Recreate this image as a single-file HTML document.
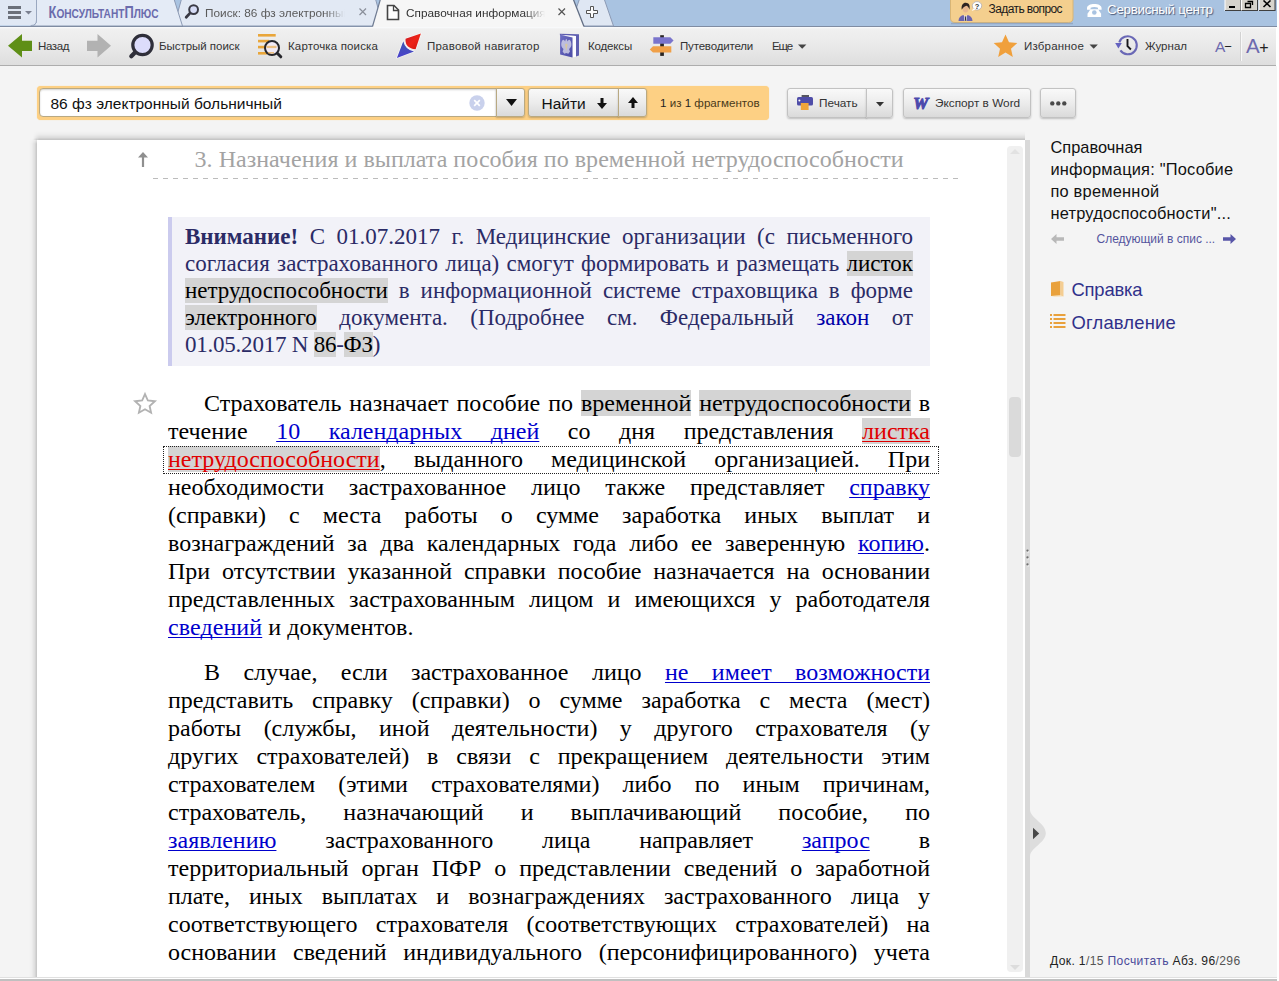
<!DOCTYPE html>
<html lang="ru"><head><meta charset="utf-8"><title>КонсультантПлюс</title>
<style>
*{box-sizing:border-box;margin:0;padding:0}
html,body{width:1279px;height:981px;overflow:hidden;background:#fff}
body{position:relative;font-family:"Liberation Sans",sans-serif;color:#222;font-size:12px}
.abs{position:absolute}
#main{left:0;top:66px;width:1277px;height:911px;background:#f4f4f4}
#botl{left:0;top:977px;width:1277px;height:2px;background:#fff;border-top:1px solid #e0e0e0;z-index:5}
#botg{left:0;top:979px;width:1277px;height:2px;background:#c0c0c0;z-index:5}
/* tab strip */
#tabs{left:0;top:0;width:1277px;height:27px;background:#a9c3e1}
#tabs svg{position:absolute;left:0;top:0}
.tt{position:absolute;white-space:nowrap;font-size:11.8px;color:#4a4a4a;top:6px;line-height:14px}
/* toolbar */
#tb{left:0;top:27px;width:1276px;height:39px;background:linear-gradient(#fbfcfe 0,#f0f0f0 2px,#ebebeb 40%,#dedede 100%);border-bottom:1px solid #adadad}
.tl{position:absolute;white-space:nowrap;font-size:11.5px;color:#333;top:39px;line-height:14px}
.ic{position:absolute;overflow:visible}
/* search */
#sbar{left:37px;top:86px;width:732px;height:34px;background:#fdd084;border-radius:4px;box-shadow:0 0 1px #fdd084}
#sinput{left:39px;top:88px;width:458px;height:29px;background:#fff;border:1px solid #b9a982;border-radius:4px 0 0 4px;box-shadow:inset 0 1px 2px rgba(0,0,0,.18)}
#stext{left:50.5px;top:95px;font-size:15.5px;line-height:18px;color:#111;white-space:nowrap}
.btn{position:absolute;height:30px;top:88px;background:linear-gradient(#f9f9f9,#ececec 50%,#dadada);border:1px solid #c2c2c2;border-radius:3px;box-shadow:0 1px 2px rgba(0,0,0,.22)}
.bl{position:absolute;white-space:nowrap;font-size:11.8px;color:#333;line-height:14px;top:96px}
/* doc */
#doc{left:37px;top:140px;width:988px;height:837px;background:#fff}
#shT{left:33px;top:131px;width:992px;height:9px;background:linear-gradient(to bottom,rgba(0,0,0,0),rgba(0,0,0,.025) 35%,rgba(0,0,0,.09) 70%,rgba(0,0,0,.21));-webkit-mask-image:linear-gradient(90deg,transparent,#000 6px);mask-image:linear-gradient(90deg,transparent,#000 6px)}
#shL{left:29px;top:138px;width:8px;height:839px;background:linear-gradient(to right,rgba(0,0,0,0),rgba(0,0,0,.025) 35%,rgba(0,0,0,.09) 70%,rgba(0,0,0,.2));-webkit-mask-image:linear-gradient(180deg,transparent,#000 6px);mask-image:linear-gradient(180deg,transparent,#000 6px)}
#docin{position:absolute;left:0;top:0;width:988px;height:837px;overflow:hidden;font-family:"Liberation Serif",serif}
#h3{position:absolute;left:157px;top:5px;font-size:24px;line-height:28px;color:#a3a3a3;white-space:nowrap}
#dash{position:absolute;left:116px;top:38px;width:806px;height:1px;background:repeating-linear-gradient(90deg,#bcbcbc 0,#bcbcbc 5px,transparent 5px,transparent 10px)}
#att{position:absolute;left:131px;top:77px;width:762px;height:149px;background:#f2f2f8;border-left:4px solid #cbcbee}
.ln{position:absolute;white-space:nowrap;text-align:justify;text-align-last:justify;white-space:normal;height:28px;overflow:visible}
.ln.a{font-size:23px;line-height:27px;color:#2b2b66;height:27px}
.ln.b{font-size:24px;line-height:28px;color:#000}
.ln a{color:#0000cc;text-decoration:underline;text-decoration-thickness:1px;text-underline-offset:2px;text-decoration-skip-ink:none}
.hl{background:#d4d4d4;color:#000}
.ln a.red{color:#e00000}
.zk{color:#0000a8}
#focus{position:absolute;left:126px;top:306px;width:776px;height:28px;border:1px dotted #222}
#sbtrack{position:absolute;left:970px;top:6px;width:16px;height:826px;background:#f0f0f0;border-radius:4px}
#sbthumb{position:absolute;left:972px;top:256.500px;width:12px;height:60.500px;background:#dadada;border-radius:4px}
#split{left:1025px;top:140px;width:5px;height:837px;background:#d9d9d9}
/* right panel */
#rtitle{left:1050.4px;top:136.3px;width:225px;font-size:16.4px;line-height:22px;color:#111;white-space:nowrap}
#rnext{left:1096.5px;top:232px;font-size:12px;line-height:14px;color:#54549e;white-space:nowrap}
.rl{font-size:18.4px;line-height:22px;color:#30308a;white-space:nowrap}
#rstat{left:1050px;top:954px;font-size:12.1px;line-height:15px;color:#222;white-space:nowrap}
#rstat i{font-style:normal;color:#555}
#rstat u{text-decoration:none;color:#4a4a9a}
</style></head><body>
<div id="main" class="abs"></div>
<div id="botl" class="abs"></div><div id="botg" class="abs"></div>
<div id="tabs" class="abs">
<svg width="1277" height="27" viewBox="0 0 1277 27">
 <!-- base line -->
 <rect x="0" y="26" width="1277" height="1" fill="#7f8ca2"/>
 <!-- search tab (behind) -->
 <path d="M181.5 -1 L174 26 L383 26 L375.5 -1 Z" fill="#e2e9f4" stroke="#8c9ab4" stroke-width="1"/>
 <!-- plus tab -->
 <path d="M579.500 -1 L570 26 L613.500 26 L604.200 -1 Z" fill="#dfe7f3" stroke="#8c9ab4" stroke-width="1"/>
 <!-- K+ tab -->
 <path d="M36.5 -1 L36.5 20 Q36.5 26 30 26 L182.5 26 L174 -1 Z" fill="#e4ebf6" stroke="#8c9ab4" stroke-width="1"/>
 <!-- menu area -->
 <path d="M0 -1 L36.5 -1 L36.5 20 Q36.5 25.5 31 25.5 L0 25.5 Z" fill="#e0e8f4"/>
 <path d="M36.5 -1 L36.5 20 Q36.5 25.5 31 25.5" fill="none" stroke="#9aa8c0" stroke-width="1"/>
 <rect x="0" y="26" width="183" height="1" fill="#7f8ca2"/>
 <!-- active tab -->
 <path d="M380.500 -1 L372.500 27 L584.200 27 L573.200 -1 Z" fill="#f6f6f6"/>
 <path d="M380.500 -1 L372.500 26.500" fill="none" stroke="#6f7b92" stroke-width="1.200"/>
 <path d="M573.200 -1 L584 26.500" fill="none" stroke="#626e84" stroke-width="1.300"/>
 <!-- hamburger -->
 <rect x="8" y="6" width="13" height="3" fill="#6b707a"/><rect x="8" y="11" width="13" height="3" fill="#6b707a"/><rect x="8" y="16" width="13" height="3" fill="#6b707a"/>
 <path d="M25 11h7l-3.5 3.5z" fill="#7a8090"/>
 <!-- search icon in tab -->
 <circle cx="193.600" cy="9.600" r="4.400" fill="#d6dcf6" stroke="#3a3a44" stroke-width="2"/>
 <path d="M189.800 13.400L186.200 17.200" stroke="#3a3a44" stroke-width="2.800" stroke-linecap="round"/>
 <!-- close x -->
 <path d="M359.500 8.500l6.500 6.500M366 8.500l-6.500 6.500" stroke="#8a8f9a" stroke-width="1.2"/>
 <path d="M558.500 8.500l6.500 6.500M565 8.500l-6.500 6.500" stroke="#555" stroke-width="1.2"/>
 <!-- doc icon -->
 <path d="M387.5 5.5h6.5l4.5 4.5v9.500h-11z" fill="#fdfdfd" stroke="#444" stroke-width="1.6" stroke-linejoin="miter"/>
 <path d="M393.5 5.500v5h5" fill="none" stroke="#444" stroke-width="1.3"/>
 <!-- plus icon -->
 <path d="M590.500 6.500h3v4h4v3h-4v4h-3v-4h-4v-3h4z" fill="#fdfdfd" stroke="#555" stroke-width="1"/>
 <!-- ask button -->
 <path d="M950.5 -1 V18 Q950.5 22.500 955 22.500 H1068.500 Q1073 22.500 1073 18 V-1 Z" fill="#f4cf8e" stroke="#d8b576" stroke-width="1"/>
 <path d="M951 23.500 H1073" stroke="#8fa3bf" stroke-width="1.500" opacity=".8"/>
 <!-- person -->
 <ellipse cx="965.600" cy="8.600" rx="2.900" ry="3.900" fill="#e8b890"/>
 <path d="M961.800 9.800c-1-5.200 1.800-7.300 4-7.100 3 .1 4.600 2.400 3.600 7-.5-2-1.500-3.600-2.900-4-1.500.5-3.700 1.600-4.700 4.100z" fill="#2e2422"/>
 <path d="M958.500 21c0-3.500 2.200-5.500 4.800-6l2.200 2.500 2.200-2.500c2.600.5 4.800 2.500 4.800 6z" fill="#6a64b0"/>
 <path d="M964.600 15l.9 1.200.9-1.200.5 5.800h-2.800z" fill="#fff"/>
 <path d="M965.200 16.200h.7l.5 4.500h-1.700z" fill="#333"/>
 <ellipse cx="977" cy="5.800" rx="4.700" ry="4.200" fill="#fff" stroke="#9a9aa8" stroke-width=".6"/>
 <path d="M973.500 8.200l-1.800 2.800 3.800-1.600z" fill="#fff"/>
 <text x="977" y="8.800" font-family="Liberation Sans, sans-serif" font-size="7.500" font-weight="bold" text-anchor="middle" fill="#333">?</text>
 <!-- phone -->
 <g fill="#fff" transform="translate(0 .7)">
 <path d="M1087 7.500c0-2.800 3.500-4.200 7.300-4.200s7.300 1.400 7.300 4.200v1.500h-3.600v-2c-1-.5-2.200-.7-3.700-.7s-2.700.2-3.700.7v2H1087z"/>
 <path d="M1090.500 8.500h7.600l3 4.500v3.200h-13.600V13z"/>
 </g>
 <circle cx="1094.300" cy="12.500" r="2.300" fill="#a9c3e1"/>
 <!-- window buttons -->
 <g>
 <rect x="1225" y="-3" width="15.500" height="13.500" fill="#d6d3cc" stroke="#fff" stroke-width="1"/><path d="M1225 10.500h16V-1" fill="none" stroke="#404040" stroke-width="1.200"/>
 <rect x="1241.500" y="-3" width="15.500" height="13.500" fill="#d6d3cc" stroke="#fff" stroke-width="1"/><path d="M1241.500 10.500h16V-1" fill="none" stroke="#404040" stroke-width="1.200"/>
 <rect x="1259" y="-3" width="15.500" height="13.500" fill="#d6d3cc" stroke="#fff" stroke-width="1"/><path d="M1259 10.500h16V-1" fill="none" stroke="#404040" stroke-width="1.200"/>
 <rect x="1229" y="6" width="6" height="2" fill="#000"/>
 <path d="M1247.500 1.500h5v3.500M1245.500 3.500h5v4h-5z" fill="none" stroke="#000" stroke-width="1.300"/>
 <path d="M1263.500 0.500l7 6.500M1270.500 0.500l-7 6.500" stroke="#000" stroke-width="1.600"/>
 </g>
 <text x="48.500" y="18" font-family="Liberation Sans, sans-serif" font-weight="bold" font-size="16.800" fill="#6b6bad" textLength="110" lengthAdjust="spacingAndGlyphs">К<tspan font-size="13.200" style="text-transform:uppercase">онсультант</tspan>П<tspan font-size="13.200" style="text-transform:uppercase">люс</tspan></text>
</svg>
<div class="tt" style="left:205px;color:#5a5a5a;width:140px;overflow:hidden;-webkit-mask-image:linear-gradient(90deg,#000 120px,transparent 140px);mask-image:linear-gradient(90deg,#000 120px,transparent 140px)">Поиск: 86 фз электронный больничный</div>
<div class="tt" style="left:406px;color:#333;width:139px;overflow:hidden;-webkit-mask-image:linear-gradient(90deg,#000 118px,transparent 139px);mask-image:linear-gradient(90deg,#000 118px,transparent 139px)">Справочная информация</div>
<div class="tt" style="letter-spacing:-0.591px;left:988.5px;top:2px;font-size:12px;color:#1a1a1a;line-height:15px">Задать вопрос</div>
<div class="tt" style="letter-spacing:-0.288px;left:1107px;top:1px;font-size:13.400px;color:#fff;line-height:17px;text-shadow:1px 1px 1px rgba(40,50,80,.75)">Сервисный центр</div>
</div>

<div id="tb" class="abs"></div>
<svg class="ic" style="left:0;top:27px" width="1277" height="39" viewBox="0 27 1277 39">
 <!-- back -->
 <path d="M8 45.700L22 34v6.700H32v10.400H22V57.400z" fill="#5f8f17"/>
 <!-- forward -->
 <path d="M111 45.700L97.500 34v6.700H87v10.400h10.500V57.400z" fill="#b2b2b2"/>
 <!-- quick search -->
 <circle cx="142.500" cy="45" r="9.700" fill="#dcdcfb" stroke="#2f2f3a" stroke-width="3.200"/>
 <path d="M135 52.500L131.300 56.200" stroke="#2f2f3a" stroke-width="4.200" stroke-linecap="round"/>
 <!-- card search -->
 <g fill="#e9a63a"><rect x="258" y="34" width="17.700" height="2.600"/><rect x="258" y="39.800" width="11" height="2.600"/><rect x="258" y="45.800" width="9" height="2.600"/><rect x="258" y="52" width="9" height="2.600"/></g>
 <circle cx="272" cy="48" r="7" fill="#f1eaf6" stroke="#26262c" stroke-width="2"/>
 <g fill="#e9a63a" opacity=".6"><rect x="266.500" y="45.800" width="10" height="2.300"/><rect x="268" y="52" width="6" height="1.600"/></g>
 <path d="M277.300 53.300L280.800 56.800" stroke="#26262c" stroke-width="3" stroke-linecap="round"/>
 <!-- navigator -->
 <defs><linearGradient id="gr" x1="0" y1="0" x2="1" y2="1"><stop offset="0" stop-color="#c41a28"/><stop offset=".5" stop-color="#ee2418"/><stop offset="1" stop-color="#cc1410"/></linearGradient>
 <linearGradient id="gb" x1="0" y1="0" x2="0" y2="1"><stop offset="0" stop-color="#3d58b0"/><stop offset="1" stop-color="#4a40cc"/></linearGradient>
 <linearGradient id="gc" x1="0" y1="0" x2="1" y2="1"><stop offset="0" stop-color="#6e6ec4"/><stop offset="1" stop-color="#4a4aa6"/></linearGradient></defs>
 <g stroke="#fff" stroke-opacity=".7" stroke-width="1.400" stroke-linejoin="round" paint-order="stroke">
 <path d="M420.900 33.600L405.500 38.800Q404.800 48.400 415.600 49.300Z" fill="url(#gr)"/>
 <path d="M403.300 41.200L396.900 57.900L414 51.400Q405.200 49.700 403.300 41.200Z" fill="url(#gb)"/></g>
 <!-- codex -->
 <path d="M559.800 33.800L579 34.200V55.500L576 56.500V36L560 35.500Z" fill="#5e5eb0"/>
 <path d="M560.100 34.800L576 36L576 56.800L572.500 57.500V37.500Z" fill="#fbfbff"/>
 <path d="M560.100 34.800L572.500 37.500V57.500L560.100 54.400Z" fill="url(#gc)"/>
 <path d="M561.300 43.200c.5-3 2-4.600 3.200-2.800l.6 1.200.5-1.900.7-1 .7 1 .5 1.900.6-1.200c1.200-1.800 2.700-.2 3.200 2.800.5 2.800-.8 4.800-2.200 5.800l.9 2.600-1.700 2.200-2-.8-2 .8-1.700-2.200.9-2.600c-1.400-1-2.700-3-2.200-5.800z" fill="#d2d2e6" opacity=".82"/>
 <path d="M565 44.500l1.300 6.500 1.300-6.500-1.300-1z" fill="#d9c79a" opacity=".95"/>
 <!-- guides -->
 <rect x="660.200" y="35.200" width="3.700" height="20.700" fill="#2a2624"/>
 <path d="M653.300 37.200H670.300L673.600 40.500L670.300 43.800H653.300Z" fill="#7a74cc"/>
 <path d="M671.300 46.200H653L649.800 49.400L653 52.600H671.300Z" fill="#f0a048"/>
 <path d="M798 44.500h8.400l-4.200 4.300z" fill="#444"/>
 <!-- star -->
 <path d="M1005.500 34.500l3.500 7.700 8.300 .9-6.300 5.600 1.800 8.200-7.300-4.300-7.300 4.300 1.800-8.200-6.300-5.600 8.300-.9z" fill="#f0a03c"/>
 <path d="M1089.500 44.500h8.400l-4.200 4.300z" fill="#444"/>
 <!-- journal -->
 <path d="M1119.300 42.300A9 9 0 1 1 1120.400 50.400" fill="none" stroke="#6a68b6" stroke-width="2.100"/>
 <path d="M1115.200 43h6.600l-3.400 5.600z" fill="#6462c0"/>
 <path d="M1127.500 39v7.200l3.400 3.300" fill="none" stroke="#18181c" stroke-width="1.900"/>
 <!-- separator -->
 <rect x="1240" y="32" width="1" height="29" fill="#d2d2d2"/><rect x="1241" y="32" width="1" height="29" fill="#f8f8f8"/>
</svg>
<div class="tl" style="letter-spacing:-0.391px;left:38px">Назад</div>
<div class="tl" style="letter-spacing:-0.035px;left:159px">Быстрый поиск</div>
<div class="tl" style="letter-spacing:0.142px;left:288px">Карточка поиска</div>
<div class="tl" style="letter-spacing:0.215px;left:427px">Правовой навигатор</div>
<div class="tl" style="letter-spacing:-0.161px;left:588px">Кодексы</div>
<div class="tl" style="letter-spacing:-0.174px;left:680px">Путеводители</div>
<div class="tl" style="letter-spacing:-1.135px;left:772px">Еще</div>
<div class="tl" style="letter-spacing:0.191px;left:1024px">Избранное</div>
<div class="tl" style="letter-spacing:0.005px;left:1145px">Журнал</div>
<div class="tl" style="left:1215px;top:38px;font-size:15.500px;line-height:18px;color:#6d6aae">A<span style="font-size:13px;position:relative;top:-1px;left:-1px;color:#222">−</span></div>
<div class="tl" style="left:1246px;top:34px;font-size:20.500px;line-height:24px;color:#6d6aae">A<span style="font-size:16px;position:relative;top:0px;left:-.5px;color:#222">+</span></div>

<div id="sbar" class="abs"></div>
<div id="sinput" class="abs"></div>
<div id="stext" class="abs">86 фз электронный больничный</div>
<svg class="ic" style="left:469px;top:95px" width="16" height="16" viewBox="0 0 16 16"><circle cx="8" cy="8" r="7.700" fill="#c9d1ec"/><path d="M5.200 5.200l5.600 5.600M10.800 5.200l-5.600 5.600" stroke="#fff" stroke-width="1.700"/></svg>
<div class="btn" style="left:496px;width:29px;top:88px;height:29px;border-radius:0 3px 3px 0;border-color:#b9a982"></div>
<svg class="ic" style="left:506px;top:99px" width="11" height="7" viewBox="0 0 11 7"><path d="M0 0h11l-5.500 7z" fill="#111"/></svg>
<div class="btn" style="left:528px;width:91px;top:88px;height:29px;border-radius:3px 0 0 3px;border-color:#b9a982"></div>
<div class="btn" style="left:618px;width:29px;top:88px;height:29px;border-radius:0 3px 3px 0;border-color:#b9a982"></div>
<div class="abs" style="left:541.500px;top:95px;font-size:15.500px;line-height:18px;color:#111;white-space:nowrap">Найти</div>
<svg class="ic" style="left:597px;top:98px" width="10" height="11" viewBox="0 0 10 11"><path d="M3.500 0h3v5H10L5 11 0 5h3.500z" fill="#111"/></svg>
<svg class="ic" style="left:628px;top:97px" width="10" height="11" viewBox="0 0 10 11"><path d="M3.500 11h3V6H10L5 0 0 6h3.500z" fill="#111"/></svg>
<div class="bl" style="left:660px;top:96px;color:#4a3a1a;font-size:11.600px"><b style="font-weight:normal;color:#222">1</b> из <b style="font-weight:normal;color:#222">1</b> фрагментов</div>
<div class="btn" style="left:787px;width:80px;border-radius:3px 0 0 3px"></div>
<div class="btn" style="left:866px;width:27px;border-radius:0 3px 3px 0"></div>
<div class="btn" style="left:903px;width:128px"></div>
<div class="btn" style="left:1040px;width:36px"></div>
<svg class="ic" style="left:797px;top:95px" width="16" height="15" viewBox="0 0 16 15"><rect x="4.600" y="0" width="7.400" height="2.400" fill="#555560"/><rect x="0" y="2" width="16" height="8.600" rx="1.600" fill="#4f4da8"/><rect x="3.800" y="8" width="7.800" height="7" fill="#f0a53a"/><circle cx="2.400" cy="5.600" r="1" fill="#fff"/></svg>
<div class="bl" style="left:819px">Печать</div>
<svg class="ic" style="left:875.700px;top:101.800px" width="8" height="4.400" viewBox="0 0 8 4.400"><path d="M0 0h8l-4 4.400z" fill="#333"/></svg>
<svg class="ic" style="left:910px;top:92px" width="22" height="20" viewBox="0 0 22 20"><text x="3.200" y="16.800" font-family="Liberation Serif, serif" font-weight="bold" font-style="italic" font-size="16.500" fill="#4c49ac" stroke="#4c49ac" stroke-width="1" textLength="15" lengthAdjust="spacingAndGlyphs">W</text></svg>
<div class="bl" style="left:935px">Экспорт в Word</div>
<svg class="ic" style="left:1049.800px;top:100.500px" width="17" height="5" viewBox="0 0 17 5"><circle cx="2.300" cy="2.400" r="2.200" fill="#4a4a4a"/><circle cx="8.300" cy="2.400" r="2.200" fill="#4a4a4a"/><circle cx="14.300" cy="2.400" r="2.200" fill="#4a4a4a"/></svg>

<div id="shT" class="abs"></div><div id="shL" class="abs"></div>
<div id="doc" class="abs"><div id="docin">
<svg class="ic" style="left:101px;top:12px" width="10" height="15" viewBox="0 0 10 15"><path d="M5 0L10 5.500H6.100V15H3.900V5.500H0z" fill="#8f8f8f"/></svg>
<div id="h3" style="letter-spacing:0.031px;left:157.600px;">3. Назначения и выплата пособия по временной нетрудоспособности</div>
<div id="dash"></div>
<div id="att"></div>
<svg class="ic" style="left:96px;top:251.800px" width="24" height="22.200" viewBox="0 0 26 24"><path d="M13 2.200l3.100 7 7.600.8-5.700 5.100 1.600 7.400L13 18.700 6.400 22.500l1.600-7.400L2.300 10l7.600-.8z" fill="#fff" stroke="#b2b2b2" stroke-width="2" stroke-linejoin="miter"/></svg>
<div class="ln a" style="top:83px;left:148px;width:728px;"><b>Внимание!</b> С 01.07.2017 г. Медицинские организации (с письменного</div>
<div class="ln a" style="top:110px;left:148px;width:728px;">согласия застрахованного лица) смогут формировать и размещать <span class="hl">листок</span></div>
<div class="ln a" style="top:137px;left:148px;width:728px;"><span class="hl">нетрудоспособности</span> в информационной системе страховщика в форме</div>
<div class="ln a" style="top:164px;left:148px;width:728px;"><span class="hl">электронного</span> документа. (Подробнее см. Федеральный <span class="zk">закон</span> от</div>
<div class="ln a" style="letter-spacing:-0.230px;top:191px;left:148px;width:728px;text-align:left;text-align-last:left;">01.05.2017 N <span class="hl">86</span>-<span class="hl">ФЗ</span>)</div>
<div class="ln b" style="top:249px;left:131px;width:762px;padding-left:36px;">Страхователь назначает пособие по <span class="hl">временной</span> <span class="hl">нетрудоспособности</span> в</div>
<div class="ln b" style="top:277px;left:131px;width:762px;">течение <a>10 календарных дней</a> со дня представления <a class="red hl">листка</a></div>
<div class="ln b" style="top:305px;left:131px;width:762px;"><a class="red hl">нетрудоспособности</a>, выданного медицинской организацией. При</div>
<div class="ln b" style="top:333px;left:131px;width:762px;">необходимости застрахованное лицо также представляет <a>справку</a></div>
<div class="ln b" style="top:361px;left:131px;width:762px;">(справки) с места работы о сумме заработка иных выплат и</div>
<div class="ln b" style="top:389px;left:131px;width:762px;">вознаграждений за два календарных года либо ее заверенную <a>копию</a>.</div>
<div class="ln b" style="top:417px;left:131px;width:762px;">При отсутствии указанной справки пособие назначается на основании</div>
<div class="ln b" style="top:445px;left:131px;width:762px;">представленных застрахованным лицом и имеющихся у работодателя</div>
<div class="ln b" style="letter-spacing:0.081px;top:473px;left:131px;width:762px;text-align:left;text-align-last:left;"><a>сведений</a> и документов.</div>
<div class="ln b" style="top:518px;left:131px;width:762px;padding-left:36px;">В случае, если застрахованное лицо <a>не имеет возможности</a></div>
<div class="ln b" style="top:546px;left:131px;width:762px;">представить справку (справки) о сумме заработка с места (мест)</div>
<div class="ln b" style="top:574px;left:131px;width:762px;">работы (службы, иной деятельности) у другого страхователя (у</div>
<div class="ln b" style="top:602px;left:131px;width:762px;">других страхователей) в связи с прекращением деятельности этим</div>
<div class="ln b" style="top:630px;left:131px;width:762px;">страхователем (этими страхователями) либо по иным причинам,</div>
<div class="ln b" style="top:658px;left:131px;width:762px;">страхователь, назначающий и выплачивающий пособие, по</div>
<div class="ln b" style="top:686px;left:131px;width:762px;"><a>заявлению</a> застрахованного лица направляет <a>запрос</a> в</div>
<div class="ln b" style="top:714px;left:131px;width:762px;">территориальный орган ПФР о представлении сведений о заработной</div>
<div class="ln b" style="top:742px;left:131px;width:762px;">плате, иных выплатах и вознаграждениях застрахованного лица у</div>
<div class="ln b" style="top:770px;left:131px;width:762px;">соответствующего страхователя (соответствующих страхователей) на</div>
<div class="ln b" style="top:798px;left:131px;width:762px;">основании сведений индивидуального (персонифицированного) учета</div>
<div id="focus"></div>
<div id="sbtrack"></div><div id="sbthumb"></div>
<svg class="ic" style="left:973px;top:9px" width="10" height="5" viewBox="0 0 10 5"><path d="M0 5L5 0l5 5z" fill="#e2e2e2"/></svg>
<svg class="ic" style="left:973px;top:825px" width="10" height="5" viewBox="0 0 10 5"><path d="M0 0L5 5l5-5z" fill="#dcdcdc"/></svg>
</div></div>
<div id="split" class="abs"></div>
<div id="rtitle" class="abs"><span style="letter-spacing:0.029px;">Справочная</span><br><span style="letter-spacing:0.209px;">информация: "Пособие</span><br><span style="letter-spacing:0.229px;">по временной</span><br><span style="letter-spacing:0.211px;">нетрудоспособности"...</span></div>
<svg class="ic" style="left:1051px;top:233.500px" width="13" height="10" viewBox="0 0 13 10"><path d="M0 5L5.500 0v3.300H13v3.400H5.500V10z" fill="#b8b8b8"/></svg>
<div id="rnext" class="abs" style="letter-spacing:-0.013px;">Следующий в спис ...</div>
<svg class="ic" style="left:1222.800px;top:233.500px" width="13" height="10" viewBox="0 0 13 10"><path d="M13 5L7.500 0v3.300H0v3.400h7.500V10z" fill="#5856a8"/></svg>
<svg class="ic" style="left:1050px;top:280px" width="15" height="18" viewBox="0 0 15 18"><path d="M1 2.500L10.500 1v14.500L1 16z" fill="#e9a13c"/><path d="M10.500 1L13.500 2v14.500l-3-1z" fill="#f4cd92"/><path d="M1 16l9.500-.5 3 1-9 .5z" fill="#f7e3c2"/></svg>
<div class="rl abs" style="letter-spacing:-0.194px;left:1071.500px;top:279.300px">Справка</div>
<svg class="ic" style="left:1050px;top:314px" width="16" height="15" viewBox="0 0 16 15"><g fill="#e9a13c"><rect x="0" y="0" width="2" height="2"/><rect x="3.500" y="0" width="12" height="2"/><rect x="0" y="4" width="2" height="2"/><rect x="3.500" y="4" width="12" height="2"/><rect x="0" y="8" width="2" height="2"/><rect x="3.500" y="8" width="12" height="2"/><rect x="0" y="12" width="2" height="2"/><rect x="3.500" y="12" width="12" height="2"/></g></svg>
<div class="rl abs" style="letter-spacing:0.187px;left:1071.500px;top:311.500px">Оглавление</div>
<div id="rstat" class="abs" style="letter-spacing:0.357px;">Док. 1<i>/15</i> <u>Посчитать</u> Абз. 96<i>/296</i></div>
<svg class="ic" style="left:1030px;top:810px" width="17" height="46" viewBox="0 0 17 46"><path d="M0 0C1 9 15.800 13 15.800 23S1 37 0 46z" fill="#dddddd"/><path d="M3 17.800l6.200 5.700-6.200 5.700z" fill="#484848"/></svg>
<svg class="ic" style="left:1025px;top:548px" width="6" height="20" viewBox="0 0 6 20"><g fill="#f4f4f4"><rect x="2.200" y="2.600" width="2" height="2"/><rect x="2.200" y="9.400" width="2" height="2"/><rect x="2.200" y="16.400" width="2" height="2"/></g><g fill="#6e6e6e"><circle cx="2.500" cy="2.600" r="1.150"/><circle cx="2.500" cy="9.400" r="1.150"/><circle cx="2.500" cy="16.400" r="1.150"/></g></svg>

</body></html>
